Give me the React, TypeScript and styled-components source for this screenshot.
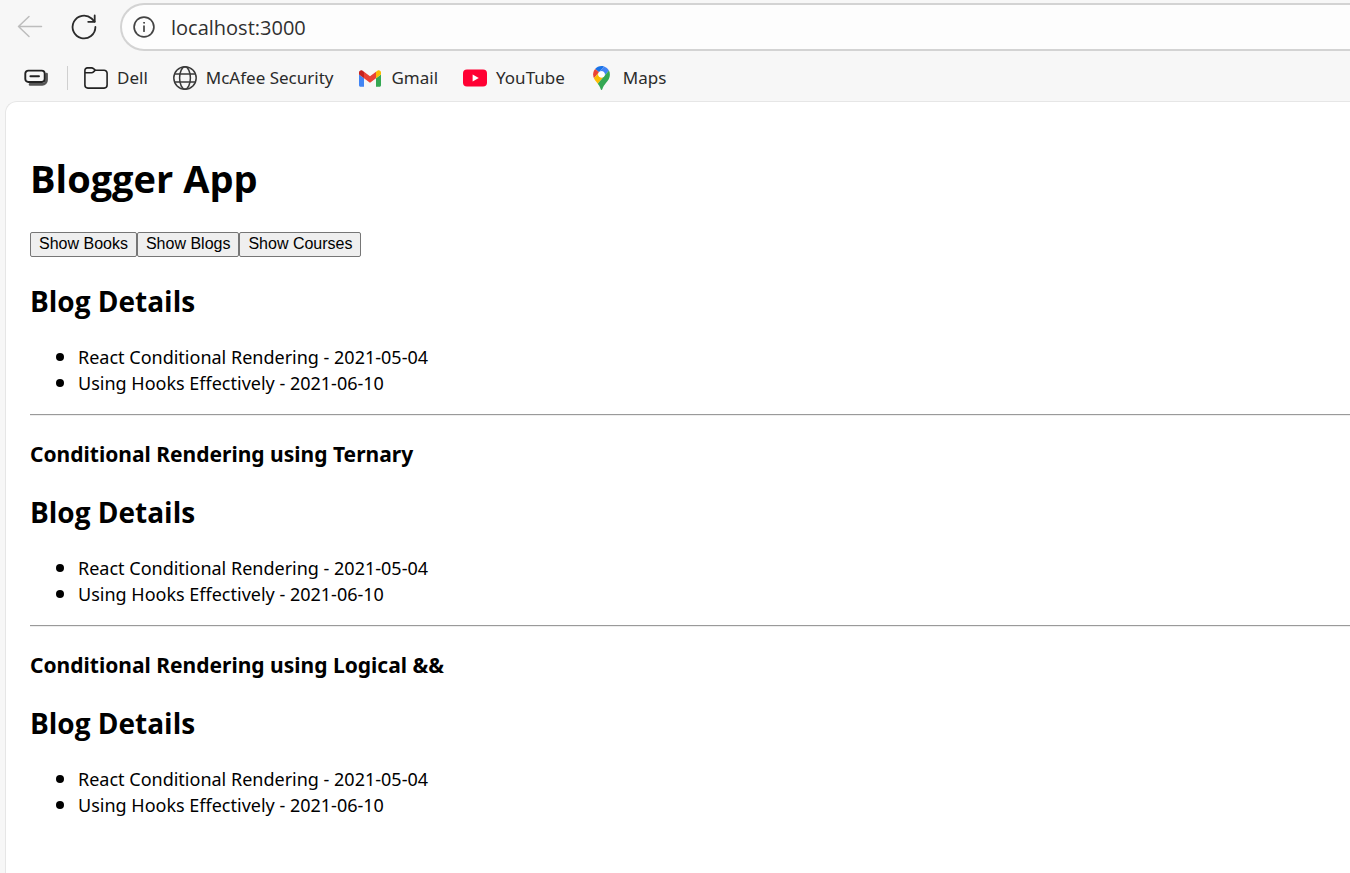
import React from "react";
import styled, { createGlobalStyle } from "styled-components";

const GlobalStyle = createGlobalStyle`
  * { box-sizing: border-box; }
  body {
    margin: 0;
    background: #f7f7f7;
    color: #000;
    font-family: "Segoe UI", "Noto Sans", sans-serif;
  }
`;

const Window = styled.div`
  display: flex;
  flex-direction: column;
  min-height: 100vh;
  overflow-x: hidden;
`;

const Toolbar = styled.header`
  display: flex;
  align-items: center;
  padding: 3px 0 0 12px;
`;

const IconButton = styled.button`
  display: flex;
  align-items: center;
  justify-content: center;
  width: 36px;
  height: 36px;
  padding: 0;
  margin-right: 18px;
  border: 0;
  background: none;
`;

const AddressBar = styled.label`
  display: flex;
  flex: 1;
  align-items: center;
  gap: 16px;
  height: 48px;
  padding-left: 11px;
  border: 2px solid #d3d3d3;
  border-right: 0;
  border-radius: 24px 0 0 24px;
  background: #fdfdfd;
`;

const AddressInput = styled.input`
  flex: 1;
  min-width: 0;
  padding: 2px 0 0;
  border: 0;
  outline: 0;
  background: none;
  color: #303030;
  font-family: "Segoe UI", "Open Sans", sans-serif;
  font-size: 20px;
  line-height: 28px;
`;

const BookmarkBar = styled.nav`
  display: flex;
  align-items: center;
  gap: 25px;
  height: 50px;
  padding: 4px 0 0 24px;
`;

const TabActions = styled.div`
  display: flex;
  align-items: center;
  height: 24px;
  padding-right: 18px;
  margin-right: -9px;
  border-right: 1px solid #d0d0d0;
`;

const PlainButton = styled.button`
  display: flex;
  padding: 0;
  border: 0;
  background: none;
`;

const Bookmark = styled.a`
  display: flex;
  align-items: center;
  gap: 9px;
  color: #2b2b2b;
  font-size: 17px;
  line-height: 24px;
  text-decoration: none;
`;

const BookmarkIcon = styled.span`
  display: flex;
  align-items: center;
  justify-content: center;
  width: 24px;
  height: 24px;
`;

const Page = styled.main`
  flex: 1;
  margin-left: 5px;
  padding: 50px 0 24px 24px;
  border: 1px solid #e6e6e6;
  border-width: 1px 0 0 1px;
  border-radius: 12px 0 0 0;
  background: #fff;
`;

const Title = styled.h1`
  margin: 0 0 28px;
  font-family: "Segoe UI", "Open Sans", sans-serif;
  font-size: 38px;
  line-height: 52px;
`;

const ButtonRow = styled.div`
  display: flex;
  margin-bottom: 24px;
`;

const ShowButton = styled.button`
  height: 25px;
  padding: 0 8px 2px;
  border: 1px solid #767676;
  border-radius: 2px;
  background: #efefef;
  color: #000;
  font-family: Arial, "Liberation Sans", sans-serif;
  font-size: 16px;
  line-height: 20px;
`;

const SectionTitle = styled.h2`
  margin: 23px 0;
  font-family: "Segoe UI", "Open Sans", sans-serif;
  font-size: 28px;
  line-height: 40px;
`;

const VariantTitle = styled.h3`
  margin: 0;
  font-size: 21px;
  line-height: 30px;
`;

const List = styled.ul`
  margin: 0;
  padding-left: 26px;
  list-style: none;
  font-size: 18px;
  line-height: 26px;
`;

const ListItem = styled.li`
  display: flex;
  align-items: center;
  gap: 14px;

  &::before {
    content: "";
    width: 8px;
    height: 8px;
    border-radius: 50%;
    background: #000;
  }
`;

const Divider = styled.hr`
  height: 2px;
  margin: 18px 0 23px;
  border: 0;
  border-top: 1px solid #9a9a9a;
  border-bottom: 1px solid #eee;
`;

const BackIcon = () => (
  <svg width="26" height="24" viewBox="0 0 26 24" fill="none" stroke="#bdbdbd" strokeWidth="1.5" strokeLinecap="round" strokeLinejoin="round">
    <path d="M24.5 11.5H1.5M12 1.5 1.5 11.5 12 21.5" />
  </svg>
);

const ReloadIcon = () => (
  <svg width="26" height="26" viewBox="0 0 26 26" fill="none" stroke="#2b2b2b" strokeWidth="1.8" strokeLinecap="round" strokeLinejoin="round">
    <path d="M24.4 13A11.4 11.4 0 1 1 20.6 4.5L23.6 7.6" />
    <path d="M23.7 1.5V7.8H17.2" />
  </svg>
);

const InfoIcon = () => (
  <svg width="22" height="22" viewBox="0 0 22 22" fill="none" stroke="#444" strokeWidth="1.7" strokeLinecap="round">
    <circle cx="11" cy="11" r="9.9" />
    <path d="M11 10v5.2" />
    <circle cx="11" cy="6.8" r=".5" fill="#444" strokeWidth="1" />
  </svg>
);

const TabsIcon = () => (
  <svg width="25" height="18" viewBox="0 0 25 18" fill="none" stroke="#222" strokeWidth="1.9" strokeLinecap="round" strokeLinejoin="round">
    <path d="M22.6 5v6a4.4 4.4 0 0 1-4.4 4.4H6" stroke="#555" strokeWidth="2.6" />
    <rect x="1.3" y="1.6" width="19.4" height="11.4" rx="3" fill="#f7f7f7" />
    <path d="M6.4 7.3h8.6" />
  </svg>
);

const FolderIcon = () => (
  <svg width="24" height="22" viewBox="0 0 24 22" fill="none" stroke="#222" strokeWidth="1.6" strokeLinejoin="round">
    <path d="M.9 6V3.4A2.5 2.5 0 0 1 3.4.9h4.2c.8 0 1.3.2 1.9.7L11.3 3.2h8.8a3 3 0 0 1 3 3v11.9a3 3 0 0 1-3 3H3.9a3 3 0 0 1-3-3z" />
    <path d="M.9 5.7h6.7c.8 0 1.3-.2 1.9-.8l1.8-1.7" />
  </svg>
);

const GlobeIcon = () => (
  <svg width="24" height="24" viewBox="0 0 24 24" fill="none" stroke="#3a3a3a" strokeWidth="1.5">
    <circle cx="12" cy="12" r="11.2" />
    <ellipse cx="12" cy="12" rx="5.4" ry="11.2" />
    <path d="M1.6 8h20.8M1.6 16h20.8" />
  </svg>
);

const GmailIcon = () => (
  <svg width="22" height="17" viewBox="52 42 88 66">
    <path fill="#4285f4" d="M58 108h14V74L52 59v43c0 3.32 2.69 6 6 6" />
    <path fill="#34a853" d="M120 108h14c3.32 0 6-2.69 6-6V59l-20 15" />
    <path fill="#fbbc04" d="M120 48v26l20-15v-8c0-7.42-8.47-11.65-14.4-7.2" />
    <path fill="#ea4335" d="M72 74V48l24 18 24-18v26L96 92" />
    <path fill="#c5221f" d="M52 51v8l20 15V48l-5.6-4.2c-5.94-4.45-14.4-.22-14.4 7.2" />
  </svg>
);

const YouTubeIcon = () => (
  <svg width="24" height="18" viewBox="0 0 24 18">
    <rect y=".5" width="24" height="17" rx="4" fill="#ff0033" />
    <path d="M9.6 5.4v7.2L15.8 9z" fill="#fff" />
  </svg>
);

const MapsIcon = () => (
  <svg width="17" height="24" viewBox="0 0 92.3 132.3">
    <path fill="#1a73e8" d="M60.2 2.2C55.8.8 51 0 46.1 0 32 0 19.3 6.4 10.8 16.5l21.8 18.3z" />
    <path fill="#ea4335" d="M10.8 16.5C4.1 24.5 0 34.9 0 46.1c0 8.7 1.7 15.7 4.6 22l28-33.3z" />
    <path fill="#4285f4" d="M46.2 28.5c9.8 0 17.7 7.9 17.7 17.7 0 4.3-1.6 8.3-4.2 11.4 0 0 13.9-16.6 27.5-32.7-5.6-10.8-15.3-19-27-22.7L32.6 34.8c3.3-3.8 8.1-6.3 13.6-6.3" />
    <path fill="#fbbc04" d="M46.2 63.8c-9.8 0-17.7-7.9-17.7-17.7 0-4.3 1.5-8.3 4.1-11.3l-28 33.3c4.8 10.6 12.8 19.2 21 29.9l34.1-40.5c-3.3 3.9-8.1 6.3-13.5 6.3" />
    <path fill="#34a853" d="M59.1 109.2c15.4-24.1 33.3-35 33.3-63 0-7.7-1.9-14.9-5.2-21.3L25.6 98c2.6 3.4 5.3 7.3 7.9 11.3 9.4 14.5 6.8 23.1 12.8 23.1s3.4-8.7 12.8-23.2" />
    <circle cx="46.2" cy="46.1" r="17.7" fill="#fff" />
  </svg>
);

const bookmarks = [
  { label: "Dell", icon: <FolderIcon /> },
  { label: "McAfee Security", icon: <GlobeIcon /> },
  { label: "Gmail", icon: <GmailIcon /> },
  { label: "YouTube", icon: <YouTubeIcon /> },
  { label: "Maps", icon: <MapsIcon /> },
];

const blogs = [
  { title: "React Conditional Rendering", date: "2021-05-04" },
  { title: "Using Hooks Effectively", date: "2021-06-10" },
];

const BlogDetails = () => (
  <section>
    <SectionTitle>Blog Details</SectionTitle>
    <List>
      {blogs.map((blog) => (
        <ListItem key={blog.title}>{`${blog.title} - ${blog.date}`}</ListItem>
      ))}
    </List>
  </section>
);

export default function App() {
  return (
    <Window>
      <GlobalStyle />
      <Toolbar>
        <IconButton aria-label="Back" disabled><BackIcon /></IconButton>
        <IconButton aria-label="Reload"><ReloadIcon /></IconButton>
        <AddressBar>
          <InfoIcon />
          <AddressInput aria-label="Address" defaultValue="localhost:3000" />
        </AddressBar>
      </Toolbar>
      <BookmarkBar aria-label="Bookmarks">
        <TabActions>
          <PlainButton aria-label="Tab groups"><TabsIcon /></PlainButton>
        </TabActions>
        {bookmarks.map((b) => (
          <Bookmark key={b.label} href="#">
            <BookmarkIcon>{b.icon}</BookmarkIcon>
            {b.label}
          </Bookmark>
        ))}
      </BookmarkBar>
      <Page>
        <Title>Blogger App</Title>
        <ButtonRow>
          <ShowButton>Show Books</ShowButton>
          <ShowButton>Show Blogs</ShowButton>
          <ShowButton>Show Courses</ShowButton>
        </ButtonRow>
        <BlogDetails />
        <Divider />
        <VariantTitle>Conditional Rendering using Ternary</VariantTitle>
        <BlogDetails />
        <Divider />
        <VariantTitle>Conditional Rendering using Logical &amp;&amp;</VariantTitle>
        <BlogDetails />
      </Page>
    </Window>
  );
}
